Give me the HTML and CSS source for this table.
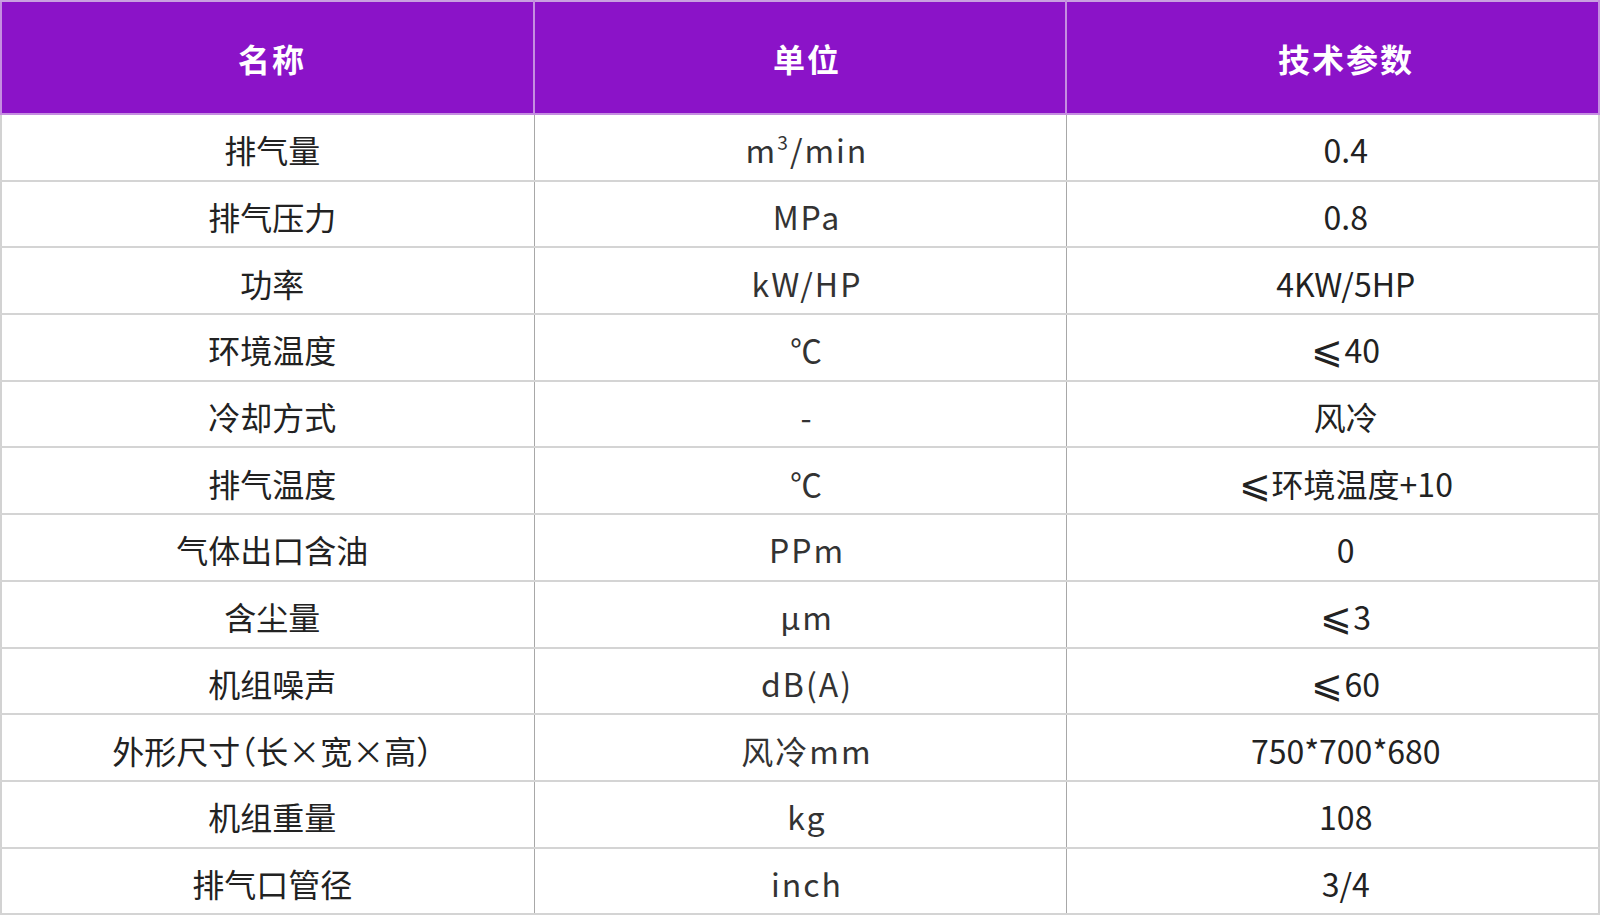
FILE: index.html
```html
<!DOCTYPE html>
<html lang="zh-CN">
<head>
<meta charset="utf-8">
<title>技术参数</title>
<link rel="stylesheet" href="styles.css">
</head>
<body>
<table class="spec">
  <colgroup>
    <col class="c1"><col class="c2"><col class="c3">
  </colgroup>
  <thead>
    <tr class="head"><th class="k">名称</th><th class="u">单位</th><th class="v">技术参数</th></tr>
  </thead>
  <tbody>
    <tr><td class="k">排气量</td><td class="u">m<sup>3</sup>/min</td><td class="v">0.4</td></tr>
    <tr><td class="k">排气压力</td><td class="u">MPa</td><td class="v">0.8</td></tr>
    <tr><td class="k">功率</td><td class="u">kW/HP</td><td class="v">4KW/5HP</td></tr>
    <tr><td class="k">环境温度</td><td class="u">℃</td><td class="v"><span class="le">⩽</span>40</td></tr>
    <tr><td class="k">冷却方式</td><td class="u">-</td><td class="v">风冷</td></tr>
    <tr><td class="k">排气温度</td><td class="u">℃</td><td class="v"><span class="le">⩽</span>环境温度+10</td></tr>
    <tr><td class="k">气体出口含油</td><td class="u">PPm</td><td class="v">0</td></tr>
    <tr><td class="k">含尘量</td><td class="u">μm</td><td class="v"><span class="le">⩽</span>3</td></tr>
    <tr><td class="k">机组噪声</td><td class="u">dB(A)</td><td class="v"><span class="le">⩽</span>60</td></tr>
    <tr><td class="k">外形尺寸<span class="halt">（</span>长×宽×高<span class="halt">）</span></td><td class="u">风冷mm</td><td class="v">750*700*680</td></tr>
    <tr><td class="k">机组重量</td><td class="u">kg</td><td class="v">108</td></tr>
    <tr><td class="k">排气口管径</td><td class="u">inch</td><td class="v">3/4</td></tr>
  </tbody>
</table>
</body>
</html>
```

FILE: styles.css
```css
html, body {
  margin: 0;
  padding: 0;
  background: #ffffff;
}

.spec {
  width: 1598px;
  border-collapse: collapse;
  table-layout: fixed;
  font-family: "Noto Sans CJK SC", "Noto Sans", sans-serif;
  color: #222222;
  border: 2px solid #d2d2d2;
}

.c1 { width: 533px; }
.c2 { width: 532px; }
.c3 { width: 533px; }

.spec tr.head { height: 113px; }
.spec tbody tr { height: 66.7px; }

.spec th {
  background: #8b13c8;
  color: #ffffff;
  font-size: 32px;
  font-weight: 700;
  letter-spacing: 2px;
  border: 2px solid #c58de0;
  border-top-color: #c9a0e0;
  padding: 0;
  text-align: center;
  vertical-align: middle;
}

.spec td {
  font-size: 32px;
  font-weight: 400;
  text-align: center;
  vertical-align: middle;
  padding: 4px 0 0;
  border-top: 2px solid #d4d4d4;
  border-bottom: 2px solid #d4d4d4;
  border-left: 1px solid #a8a8a8;
  border-right: 1px solid #a8a8a8;
  line-height: 1;
}

.spec .k { padding-left: 9px; }
.spec .u { padding-left: 14px; }
.spec .v { padding-left: 27px; }

.spec td.u {
  color: #333333;
  letter-spacing: 2px;
}

.spec sup {
  font-size: 0.6em;
  line-height: 0;
  vertical-align: 0.7em;
}

.le {
  font-family: "DejaVu Sans", sans-serif;
  font-size: 38px;
  font-weight: 300;
  line-height: 0;
  margin-right: 1px;
}

.halt {
  font-feature-settings: "halt" 1;
}
```
